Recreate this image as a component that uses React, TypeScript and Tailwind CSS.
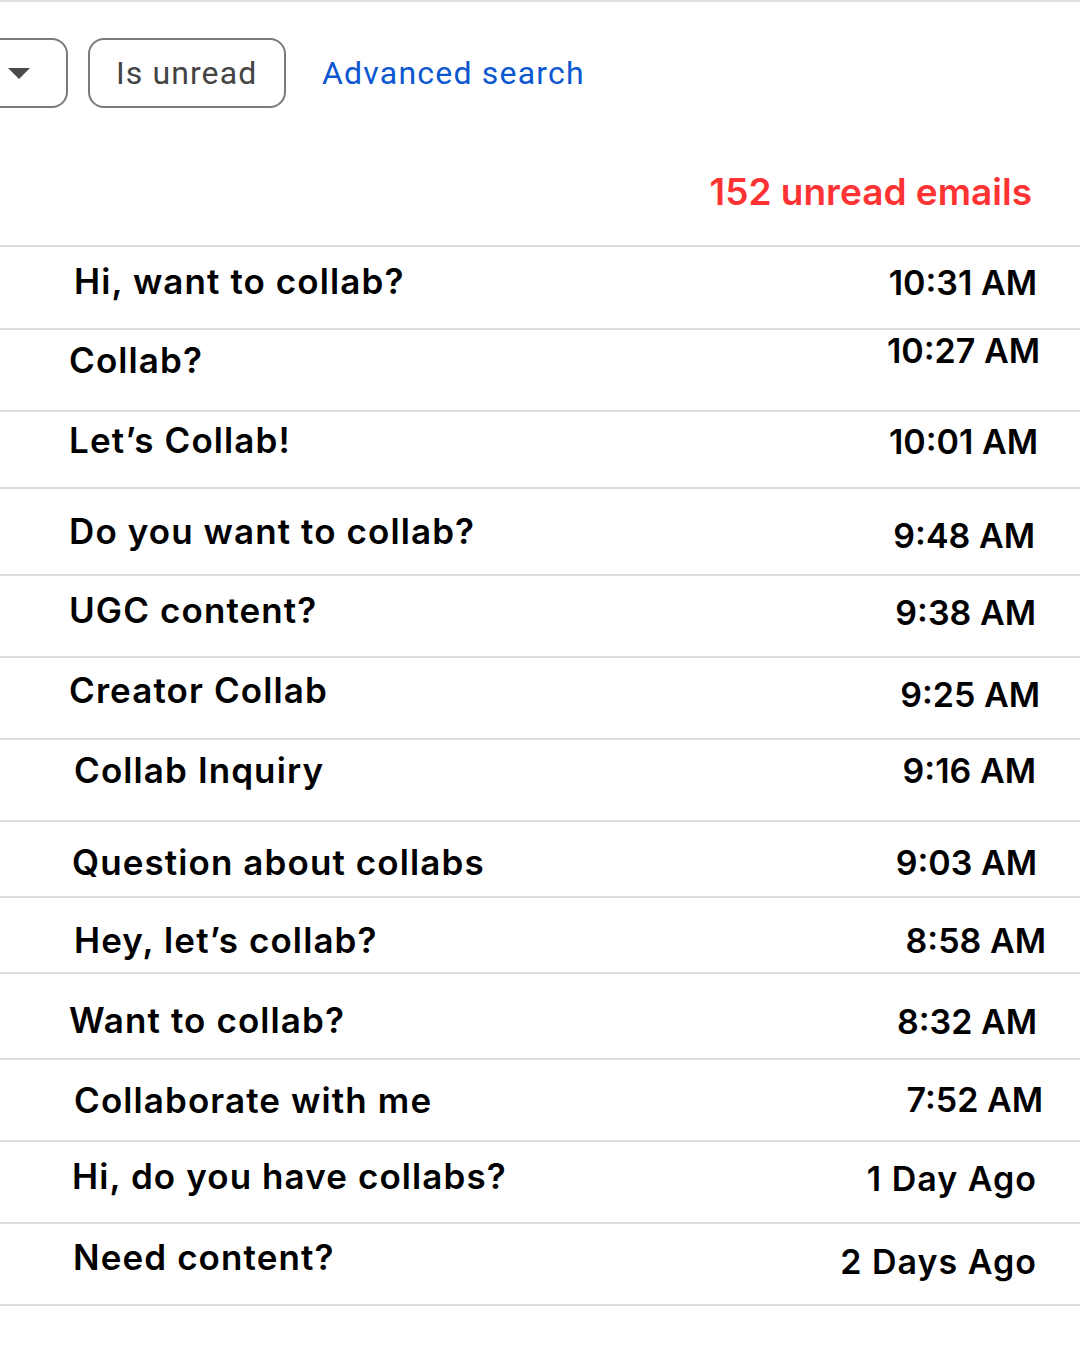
import React from "react";

type Row = {
  title: string;
  time: string;
  row: string;
  pad: string;
  tm: string;
  hm: string;
  wide?: boolean;
};

const rows: Row[] = [
  { title: "Hi, want to collab?", time: "10:31 AM", row: "h-[83px]", pad: "pl-[74px] pr-[43px]", tm: "mt-[17px]", hm: "mt-[19px]" },
  { title: "Collab?", time: "10:27 AM", row: "h-[82px]", pad: "pl-[69px] pr-[40px]", tm: "mt-[13px]", hm: "mt-[4px]" },
  { title: "Let\u2019s Collab!", time: "10:01 AM", row: "h-[77px]", pad: "pl-[69px] pr-[42px]", tm: "mt-[11px]", hm: "mt-[13px]" },
  { title: "Do you want to collab?", time: "9:48 AM", row: "h-[87px]", pad: "pl-[69px] pr-[45px]", tm: "mt-[25px]", hm: "mt-[30px]" },
  { title: "UGC content?", time: "9:38 AM", row: "h-[82px]", pad: "pl-[69px] pr-[44px]", tm: "mt-[17px]", hm: "mt-[20px]" },
  { title: "Creator Collab", time: "9:25 AM", row: "h-[82px]", pad: "pl-[69px] pr-[40px]", tm: "mt-[15px]", hm: "mt-[20px]" },
  { title: "Collab Inquiry", time: "9:16 AM", row: "h-[82px]", pad: "pl-[74px] pr-[44px]", tm: "mt-[13px]", hm: "mt-[14px]" },
  { title: "Question about collabs", time: "9:03 AM", row: "h-[76px]", pad: "pl-[72px] pr-[43px]", tm: "mt-[23px]", hm: "mt-[24px]" },
  { title: "Hey, let\u2019s collab?", time: "8:58 AM", row: "h-[76px]", pad: "pl-[74px] pr-[34px]", tm: "mt-[25px]", hm: "mt-[26px]" },
  { title: "Want to collab?", time: "8:32 AM", row: "h-[86px]", pad: "pl-[69px] pr-[43px]", tm: "mt-[29px]", hm: "mt-[31px]" },
  { title: "Collaborate with me", time: "7:52 AM", row: "h-[82px]", pad: "pl-[74px] pr-[37px]", tm: "mt-[23px]", hm: "mt-[23px]" },
  { title: "Hi, do you have collabs?", time: "1 Day Ago", row: "h-[82px]", pad: "pl-[72px] pr-[43px]", tm: "mt-[17px]", hm: "mt-[20px]", wide: true },
  { title: "Need content?", time: "2 Days Ago", row: "h-[84px] border-b-2", pad: "pl-[73px] pr-[43px]", tm: "mt-[16px]", hm: "mt-[21px]", wide: true },
];

export default function App() {
  return (
    <div className="w-[1080px] h-[1350px] bg-white overflow-hidden border-t-2 border-[#e0e0e0] font-['Inter','Liberation_Sans',sans-serif]">
      {/* filter bar */}
      <div className="flex items-center mt-[36px] h-[70px]">
        <div className="-ml-[40px] w-[108px] h-[70px] rounded-[16px] border-2 border-[#7a7a7a] flex items-center justify-end pr-[36px]">
          <svg width="22" height="11" viewBox="0 0 22 11">
            <path d="M0 0 L22 0 L11 11 Z" fill="#4a4a4a" />
          </svg>
        </div>
        <div className="ml-[20px] w-[198px] h-[70px] rounded-[16px] border-2 border-[#7a7a7a] flex items-center pl-[26px]">
          <span className="font-['Roboto',sans-serif] text-[32px] text-[#444444] leading-none tracking-[1.1px]">Is unread</span>
        </div>
        <span className="ml-[36px] font-['Roboto',sans-serif] text-[32px] text-[#0b57d0] leading-none tracking-[1.2px]">Advanced search</span>
      </div>

      <div className="flex justify-end pr-[48px] mt-[65px] h-[72px]">
        <span className="text-[37px] font-semibold text-[#ff3333] leading-none">152 unread emails</span>
      </div>

      <div>
        {rows.map((r, i) => (
          <div key={i} className={`flex justify-between items-start border-t-2 border-[#dddddd] ${r.row} ${r.pad}`}>
            <span className={`text-[35px] font-semibold text-black leading-none tracking-[1.1px] ${r.tm}`}>{r.title}</span>
            <span className={`text-[34px] font-semibold text-black leading-none ${r.wide ? "tracking-[1px]" : "tracking-[0px]"} ${r.hm}`}>{r.time}</span>
          </div>
        ))}
      </div>
    </div>
  );
}
